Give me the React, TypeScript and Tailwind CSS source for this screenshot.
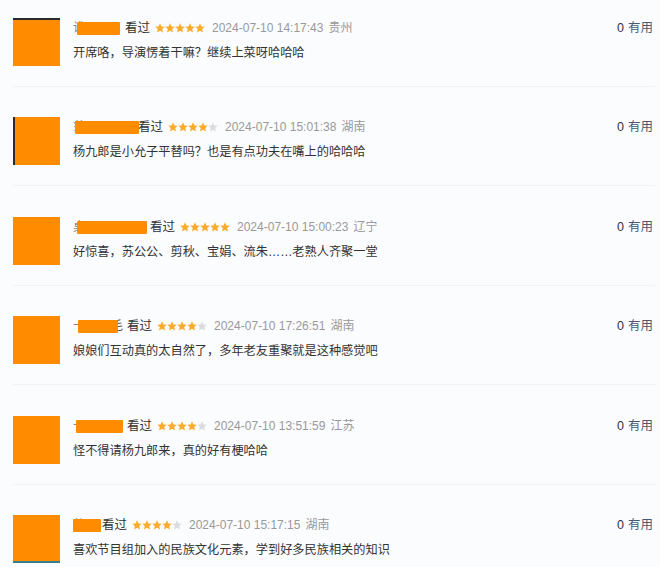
import React from 'react';

interface Review {
  nameChar: string;
  nameWidth: number;
  maskLeft: number;
  maskWidth: number;
  tail?: string;
  stars: number;
  time: string;
  place: string;
  text: string;
  edge?: string;
}

const reviews: Review[] = [
  { nameChar: '谁', nameWidth: 48, maskLeft: 4, maskWidth: 43, stars: 5, time: '2024-07-10 14:17:43', place: '贵州', text: '开席咯，导演愣着干嘛？继续上菜呀哈哈哈', edge: 'border-t-2 border-t-[#2a2a2a]' },
  { nameChar: '翁', nameWidth: 61, maskLeft: 2, maskWidth: 64, stars: 4, time: '2024-07-10 15:01:38', place: '湖南', text: '杨九郎是小允子平替吗？也是有点功夫在嘴上的哈哈哈', edge: 'border-l-2 border-l-[#2a2a2a]' },
  { nameChar: '桌', nameWidth: 73, maskLeft: 4, maskWidth: 70, stars: 5, time: '2024-07-10 15:00:23', place: '辽宁', text: '好惊喜，苏公公、剪秋、宝娟、流朱……老熟人齐聚一堂' },
  { nameChar: '一', nameWidth: 50, maskLeft: 5, maskWidth: 40, tail: '毛', stars: 4, time: '2024-07-10 17:26:51', place: '湖南', text: '娘娘们互动真的太自然了，多年老友重聚就是这种感觉吧' },
  { nameChar: '一', nameWidth: 50, maskLeft: 3, maskWidth: 47, stars: 4, time: '2024-07-10 13:51:59', place: '江苏', text: '怪不得请杨九郎来，真的好有梗哈哈' },
  { nameChar: '仙', nameWidth: 25, maskLeft: 0, maskWidth: 28, stars: 4, time: '2024-07-10 15:17:15', place: '湖南', text: '喜欢节目组加入的民族文化元素，学到好多民族相关的知识', edge: 'border-b-2 border-b-[#3c7c86]' },
];

const Star: React.FC<{ filled: boolean }> = ({ filled }) => (
  <svg width="10" height="10" viewBox="1 1.5 22 21" className="shrink-0">
    <path
      d="M12 1.8l3.1 6.9 7.4.7-5.6 5 1.7 7.4L12 17.9l-6.6 3.9 1.7-7.4-5.6-5 7.4-.7z"
      fill={filled ? '#fbab2c' : '#dcdcdc'}
    />
  </svg>
);

const ReviewRow: React.FC<{ review: Review }> = ({ review }) => (
  <div className="flex h-[87px] ml-[13px] mr-[5px] mb-[12.4px] pt-[18px] border-b border-[#f0f2f5]">
    <div className={`w-[47px] h-[48px] bg-[#ff8c00] shrink-0 ${review.edge ?? ''}`} />
    <div className="flex-1 ml-[13px]">
      <div className="flex items-center h-[14px] mt-[3px] text-[12.5px] leading-[14px]">
        <span className="relative flex items-center text-[#888]" style={{ width: review.nameWidth }}>
          {review.nameChar}
          {review.tail && <span className="absolute right-0 text-[#555]">{review.tail}</span>}
          <span
            className="absolute top-[1px] h-[13px] bg-[#ff8c00] rounded-[1px] z-10"
            style={{ left: review.maskLeft, width: review.maskWidth }}
          />
        </span>
        <span className="ml-[4px] text-[#333]">看过</span>
        <span className="flex ml-[5px]">
          {[0, 1, 2, 3, 4].map((i) => (
            <Star key={i} filled={i < review.stars} />
          ))}
        </span>
        <span className="ml-[7px] text-[12px] text-[#999]">{review.time}</span>
        <span className="ml-[5px] text-[12px] text-[#999]">{review.place}</span>
        <span className="ml-auto mr-[2px] text-[12.5px]">
          <span className="text-[#333]">0</span>
          <span className="ml-[4px] text-[#4a5a6e]">有用</span>
        </span>
      </div>
      <div className="mt-[11px] h-[14px] leading-[14px] text-[12.2px] text-[#333]">{review.text}</div>
    </div>
  </div>
);

const App: React.FC = () => {
  return (
    <div
      className="w-[660px] h-[567px] overflow-hidden bg-[#fbfcfe]"
      style={{ fontFamily: '"Liberation Sans", "Noto Sans CJK SC", sans-serif' }}
    >
      {reviews.map((r, i) => (
        <ReviewRow key={i} review={r} />
      ))}
    </div>
  );
};

export default App;
